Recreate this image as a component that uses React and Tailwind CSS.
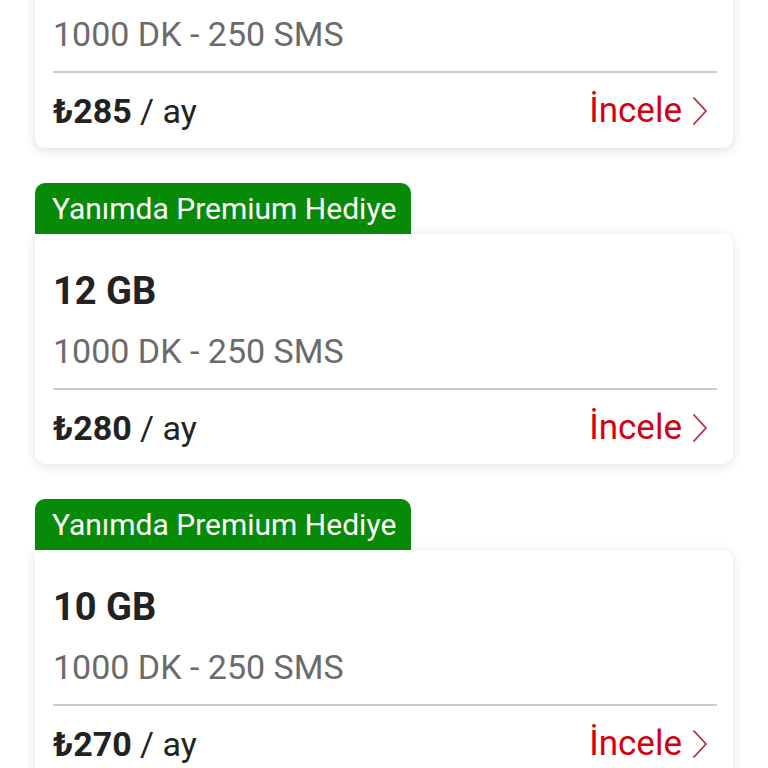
import React from 'react';

const plans = [
    { gb: null, price: '285', badge: false },
    { gb: '12 GB', price: '280', badge: true },
    { gb: '10 GB', price: '270', badge: true },
];

function Chevron() {
    return (
        <svg width="18" height="30" viewBox="0 0 18 30" fill="none" className="ml-[9px]">
            <polyline points="3,2 15,15 3,28" stroke="#b8283a" strokeWidth="1.8" strokeLinecap="round" strokeLinejoin="round" />
        </svg>
    );
}

function PlanCard({ plan, first }) {
    return (
        <div className={first ? '-mt-[20px]' : ''}>
            {plan.badge && (
                <div className="inline-block bg-[#078a07] text-white text-[30px] leading-[51px] pl-[17px] pr-[15px] rounded-t-[10px]">
                    Yanımda Premium Hediye
                </div>
            )}
            <div className={`bg-white shadow-[0_2px_12px_rgba(0,0,0,0.13)] rounded-b-[10px] rounded-tr-[10px] ${plan.badge ? 'rounded-tl-none' : 'rounded-tl-[10px]'} pl-[18px] pr-[16px] ${plan.gb ? 'pt-[37px] pb-[18px]' : 'pt-[36px] pb-[19px]'}`}>
                {plan.gb && <div className="text-[38px] leading-[40px] font-bold text-[#222] mb-[22px]">{plan.gb}</div>}
                <div className="text-[34px] leading-[36px] text-[#6b6b6b]">1000 DK - 250 SMS</div>
                <div className="mt-[19px] h-[2px] bg-[#cccccc]" />
                <div className="pt-[20px] flex items-center justify-between">
                    <div className="text-[34px] leading-[36px] text-[#222]">
                        <span className="font-bold">₺{plan.price}</span> / ay
                    </div>
                    <div className="flex items-center text-[35px] leading-[36px] text-[#d3000f] pr-[8px]">
                        İncele
                        <Chevron />
                    </div>
                </div>
            </div>
        </div>
    );
}

export default function App() {
    return (
        <div className="h-[768px] overflow-hidden bg-white px-[35px]" style={{ fontFamily: 'Roboto, "Noto Sans", sans-serif' }}>
            <div className="flex flex-col gap-[35px]">
                {plans.map((plan, i) => (
                    <PlanCard key={i} plan={plan} first={i === 0} />
                ))}
            </div>
        </div>
    );
}
